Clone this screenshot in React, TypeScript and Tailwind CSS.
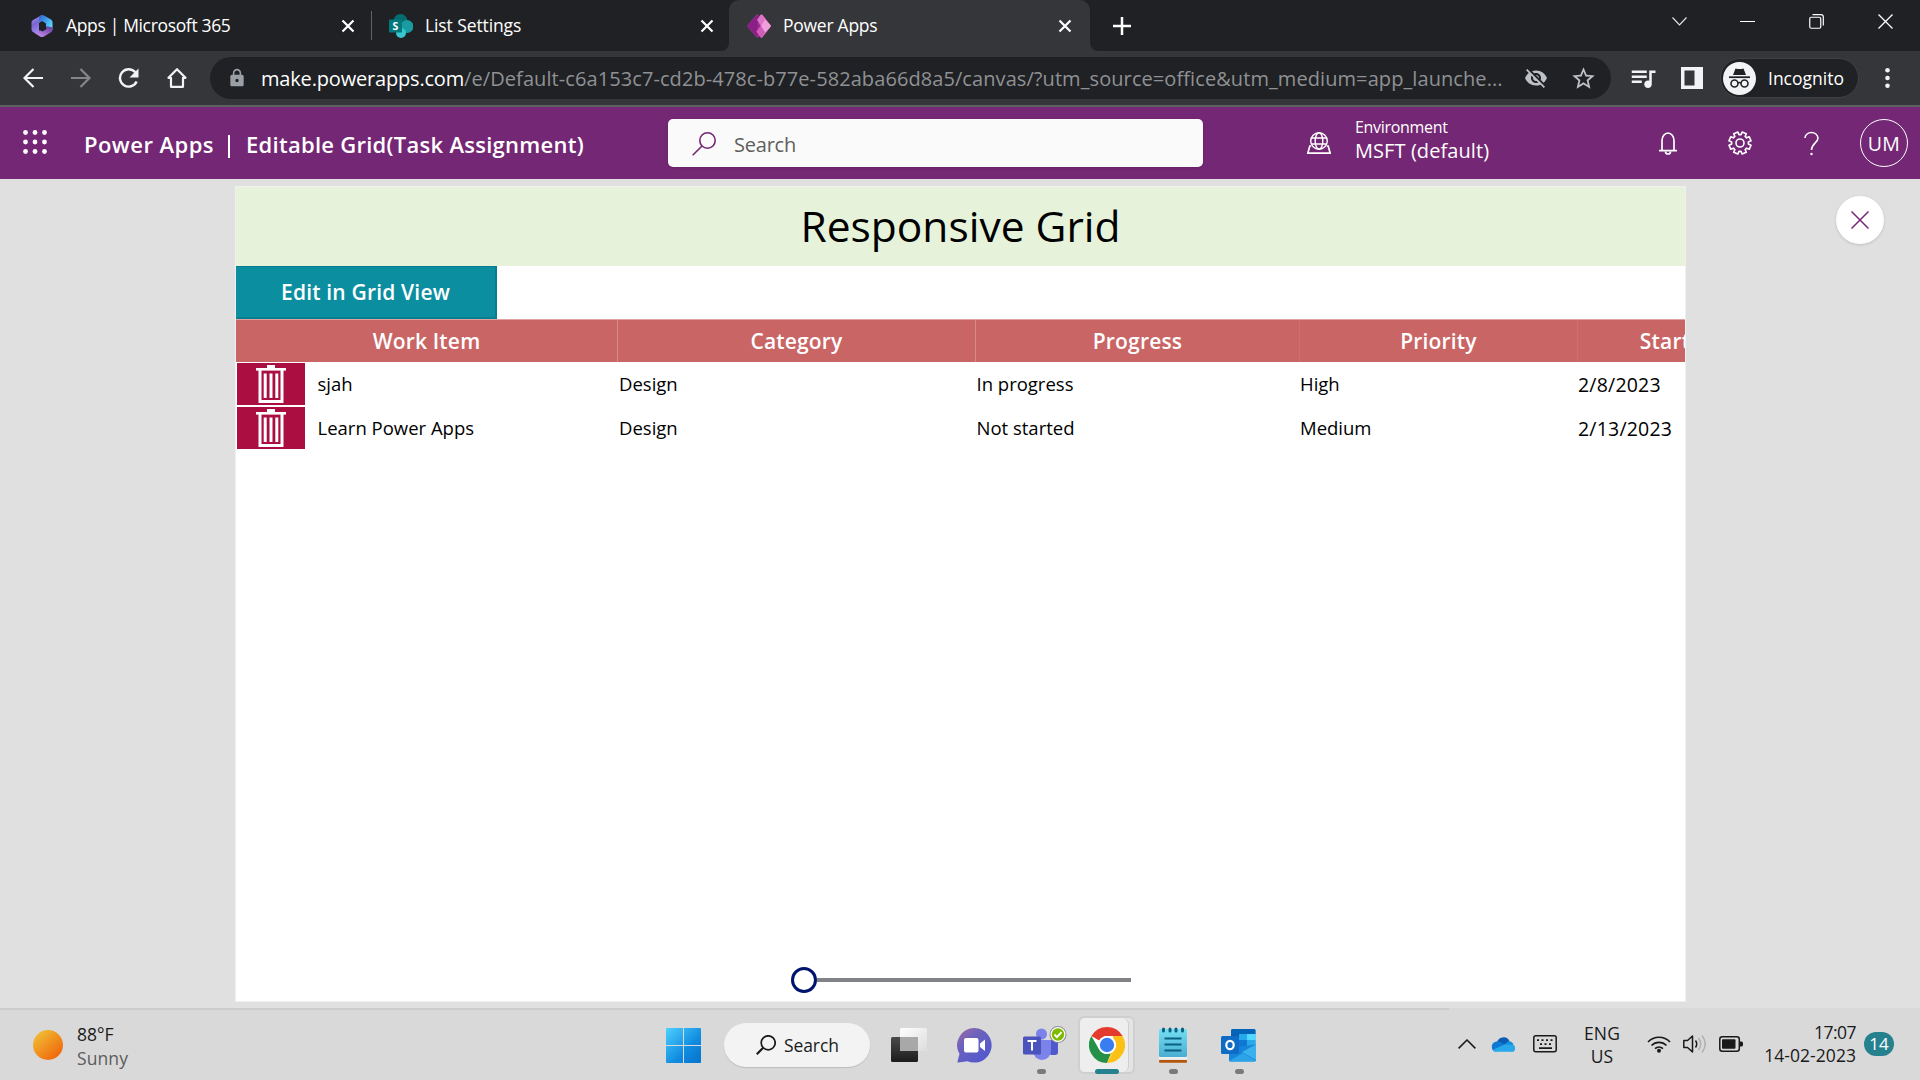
import type { ReactNode } from "react";
import { MdLock, MdQueueMusic, MdStarOutline, MdVisibilityOff } from "react-icons/md";

type P = { className?: string };

function Icon({ w, h, className = "", children, vb }: { w: number; h: number; className?: string; children: ReactNode; vb?: string }) {
  return (
    <svg width={w} height={h} viewBox={vb ?? `0 0 ${w} ${h}`} fill="none" className={"block shrink-0 " + className}>
      {children}
    </svg>
  );
}

function Microsoft365Logo({ className }: P) {
  return (
    <Icon w={22} h={24} className={className}>
      <defs>
        <linearGradient id="m1" x1="0" y1="0" x2="0.3" y2="1">
          <stop offset="0" stopColor="#b79cf4" /><stop offset="0.5" stopColor="#7a66d0" /><stop offset="1" stopColor="#9f86ee" />
        </linearGradient>
        <linearGradient id="m2" x1="0" y1="0" x2="1" y2="0.7">
          <stop offset="0" stopColor="#3560cf" /><stop offset="0.5" stopColor="#3f9bea" /><stop offset="1" stopColor="#5bdcfb" />
        </linearGradient>
        <linearGradient id="m3" x1="0" y1="1" x2="1" y2="0">
          <stop offset="0" stopColor="#d59cf6" /><stop offset="0.5" stopColor="#9a68cc" /><stop offset="1" stopColor="#5a3796" />
        </linearGradient>
      </defs>
      <path d="M11 1 2 6Q.5 7 .5 8.500v7Q.5 17 2 18l3.500 2Q8 20.500 8 18V9l3-2.500Z" fill="url(#m1)" />
      <path d="M9.500 1.500Q11 .3 13 1.500l7 4Q21.500 6.500 21.500 8v8L15 13V9.500L11 7 8 9V4Q8 2.500 9.500 1.500Z" fill="url(#m2)" />
      <path d="M21.500 13.500v2.500q0 1.300-1.500 2.200l-7 4.300q-2 1.200-4 0L3.500 19q3 1 4.500-1l.5-2 3 1.500 4-2.500V12Z" fill="url(#m3)" />
    </Icon>
  );
}

function SharePointLogo({ className }: P) {
  return (
    <Icon w={24} h={24} className={className}>
      <circle cx="11.500" cy="7" r="7" fill="#036c70" />
      <circle cx="18" cy="12.500" r="6.500" fill="#1a9ba1" />
      <circle cx="12" cy="19" r="5" fill="#37c6d0" />
      <rect x="0" y="5.500" width="13" height="13" rx="1" fill="#03787c" />
      <text x="6.500" y="16" textAnchor="middle" fontFamily="Open Sans" fontWeight="700" fontSize="10.500" fill="#fff">S</text>
    </Icon>
  );
}

function PowerAppsLogo({ className }: P) {
  return (
    <Icon w={24} h={24} className={className}>
      <path d="M9.500.8Q10.500 0 11.500.8L18 12l-6.500 11.200q-1 .8-2 0L.6 13Q0 12 .6 11Z" fill="#a0309a" />
      <path d="M10.500 1 14 4l-4 6 2 2-2 2 2 5-1.500 4L.6 13Q0 12 .6 11Z" fill="#8a1f86" />
      <path d="M13.500.8q1-.8 2 0L23.400 11q.6 1 0 2l-7.900 10.200q-1 .8-2 0L9.500 17.500 14 12 10 6Z" fill="#dd74c5" />
      <path d="M18 5.500 23.400 11q.6 1 0 2L18 18.500 14 12Z" fill="#efa0dc" />
      <path d="M14 12l4 6.500-2.500 4.700q-1 .8-2 0L9.500 17.500Z" fill="#d25cb8" />
    </Icon>
  );
}

function Cross({ className }: P) {
  return (
    <Icon w={14} h={14} className={className}>
      <path d="M1.500 1.500l11 11M12.500 1.500l-11 11" stroke="#fff" strokeWidth="2.200" />
    </Icon>
  );
}

function TabStrip() {
  return (
    <div className="flex h-[51px] items-center bg-[#202124] text-[17.5px] text-white">
      <div className="flex w-[371px] items-center">
        <Microsoft365Logo className="ml-[31px]" />
        <span className="ml-[13px] w-[275px] whitespace-nowrap tracking-[-0.34px]">Apps | Microsoft 365</span>
        <Cross />
      </div>
      <div className="h-[29px] w-px bg-[#5f6368]" />
      <div className="flex w-[349px] items-center">
        <SharePointLogo className="ml-[17px]" />
        <span className="ml-3 w-[275px] whitespace-nowrap tracking-[-0.1px]">List Settings</span>
        <Cross />
      </div>
      <div className="flex h-[51px] w-2 items-end bg-[#35363a]"><div className="h-[51px] w-2 rounded-br-lg bg-[#202124]" /></div>
      <div className="flex h-[51px] w-[361px] items-center rounded-t-[10px] bg-[#35363a]">
        <PowerAppsLogo className="ml-[18px]" />
        <span className="ml-3 w-[275px] whitespace-nowrap tracking-[-0.26px]">Power Apps</span>
        <Cross />
      </div>
      <div className="h-[51px] w-2 bg-[#35363a]"><div className="h-[51px] w-2 rounded-bl-lg bg-[#202124]" /></div>
      <Icon w={18} h={18} className="ml-[15px]"><path d="M9 0v18M0 9h18" stroke="#fff" strokeWidth="2.500" /></Icon>
      <div className="ml-auto flex h-[43px] items-center self-start">
        <Icon w={15} h={9} className="mr-[53px]"><path d="M.5.5l7 7.500L14.500.5" stroke="#e8e8e8" strokeWidth="1.100" /></Icon>
        <div className="mr-[54px] h-px w-[15px] bg-white" />
        <Icon w={15} h={15} className="mr-[54px]">
          <rect x=".75" y="3.250" width="11" height="11" rx="1.500" stroke="#fff" strokeWidth="1.200" />
          <path d="M3.500.7H12Q14.300.7 14.300 3v8.500" stroke="#fff" strokeWidth="1.200" />
        </Icon>
        <Icon w={15} h={15} className="mr-[27px]"><path d="M.5.5l14 14M14.500.5l-14 14" stroke="#fff" strokeWidth="1.300" /></Icon>
      </div>
    </div>
  );
}

function Toolbar() {
  return (
    <div className="flex h-14 items-center border-b-2 border-[#5f6062] bg-[#35363a]">
      <Icon w={20} h={20} className="ml-[23px]"><path d="M20 10H2M10.500 1 1.500 10l9 9" stroke="#f1f3f4" strokeWidth="2.200" /></Icon>
      <Icon w={20} h={20} className="ml-7"><path d="M0 10h18M9.500 1l9 9-9 9" stroke="#85868a" strokeWidth="2.200" /></Icon>
      <Icon w={21} h={21} className="ml-[27px]">
        <path d="M17.300 4.300A8.700 8.700 0 1 0 18.600 13.500" stroke="#f1f3f4" strokeWidth="2.400" />
        <path d="M20.500.5v9h-9Z" fill="#f1f3f4" />
      </Icon>
      <Icon w={20} h={20} className="ml-[28px]"><path d="M1.500 9.800H4v9h12v-9h2.500L10 1.200Z" stroke="#f1f3f4" strokeWidth="2.200" strokeLinejoin="round" /></Icon>
      <div className="ml-[23px] flex h-[42px] w-[1401px] items-center rounded-full bg-[#202124] text-[20px]">
        <MdLock className="ml-[17px] size-5 text-[#9aa0a6]" />
        <div className="ml-[14px] w-[1258px] whitespace-nowrap pt-0.5">
          <span className="tracking-[-0.18px] text-white">make.powerapps.com</span>
          <span className="tracking-[0.08px] text-[#8f9194]">/e/Default-c6a153c7-cd2b-478c-b77e-582aba66d8a5/canvas/?utm_source=office&amp;utm_medium=app_launche...</span>
        </div>
        <MdVisibilityOff className="ml-[5px] size-6 text-[#bdc1c6]" />
        <MdStarOutline className="ml-[22px] size-[27px] text-[#bdc1c6]" />
      </div>
      <MdQueueMusic className="ml-[17px] size-[30px] text-[#f1f3f4]" />
      <Icon w={22} h={22} className="ml-[23px]">
        <rect x="0" y="0" width="22" height="22" fill="#f1f3f4" />
        <rect x="3.500" y="3.500" width="10" height="15" fill="#35363a" />
      </Icon>
      <div className="ml-[17px] flex h-10 w-[139px] items-center rounded-full border border-[#3f4145] bg-[#202124]">
        <Icon w={33} h={33} className="ml-[2px]">
          <circle cx="16.500" cy="16.500" r="16.500" fill="#f1f3f4" />
          <path d="M12.500 6.500q4 1.200 8 0l2.500 6.500h-13Z" fill="#202124" />
          <path d="M6 15.200h21" stroke="#202124" strokeWidth="1.800" />
          <circle cx="11.500" cy="21.500" r="3.500" stroke="#202124" strokeWidth="1.600" />
          <circle cx="21.500" cy="21.500" r="3.500" stroke="#202124" strokeWidth="1.600" />
          <path d="M14.800 21q1.700-1.200 3.400 0" stroke="#202124" strokeWidth="1.500" />
        </Icon>
        <span className="ml-3 text-[17.5px] text-white">Incognito</span>
      </div>
      <Icon w={5} h={20} className="ml-[26px]">
        <circle cx="2.500" cy="2.300" r="2.300" fill="#f1f3f4" /><circle cx="2.500" cy="10" r="2.300" fill="#f1f3f4" /><circle cx="2.500" cy="17.700" r="2.300" fill="#f1f3f4" />
      </Icon>
    </div>
  );
}

function gearPath() {
  const pts: string[] = [];
  const teeth = 8;
  for (let i = 0; i < teeth; i++) {
    const base = (i * 2 * Math.PI) / teeth + Math.PI / 8;
    [[-0.27, 8.400], [-0.2, 11.200], [0.2, 11.200], [0.27, 8.400]].forEach(([a, r]) => {
      pts.push(`${(12 + r * Math.cos(base + a)).toFixed(2)} ${(12 + r * Math.sin(base + a)).toFixed(2)}`);
    });
  }
  return "M" + pts.join("L") + "Z";
}

function AppHeader() {
  return (
    <div className="flex h-[72px] items-center bg-[#742774] text-white">
      <Icon w={24} h={24} className="ml-[23px] mb-0.5">
        {[2.500, 12, 21.500].map((y) => [2.500, 12, 21.500].map((x) => <circle key={`${x}-${y}`} cx={x} cy={y} r="2.400" fill="#fff" />))}
      </Icon>
      <div className="ml-[37px] flex w-[584px] items-center whitespace-nowrap pt-0.5 text-[22px] font-semibold">
        <span className="w-[144px] tracking-[0.46px]">Power Apps</span>
        <div className="mt-1 h-[23px] w-[2px] bg-white" />
        <span className="ml-4 tracking-[0.27px]">Editable Grid(Task Assignment)</span>
      </div>
      <div className="flex h-12 w-[535px] items-center rounded-[5px] bg-[#fafafa] shadow-sm">
        <Icon w={24} h={24} className="ml-6 mt-px">
          <circle cx="15.500" cy="8.500" r="7.700" stroke="#742774" strokeWidth="1.600" />
          <path d="M10 14 .7 23.300" stroke="#742774" strokeWidth="1.600" />
        </Icon>
        <span className="ml-[18px] pt-1 text-[20px] tracking-[-0.22px] text-[#605e5c]">Search</span>
      </div>
      <Icon w={24} h={22} className="ml-[104px]">
        <g stroke="#fff" strokeWidth="1.400">
          <circle cx="12" cy="9" r="8.300" /><ellipse cx="12" cy="9" rx="3.800" ry="8.300" />
          <path d="M4.500 6h15M4.500 12h15" />
          <path d="M4.300 14H2.800L.8 21.200h22.400L21.200 14h-1.500" strokeWidth="1.700" />
        </g>
      </Icon>
      <div className="ml-6 w-[304px] whitespace-nowrap pb-[7px]">
        <div className="-mt-px text-[16px] leading-[22px] tracking-[-0.3px]">Environment</div>
        <div className="text-[20px] leading-[25px] tracking-[0.08px]">MSFT (default)</div>
      </div>
      <Icon w={18} h={23}>
        <path d="M3 18.500V8.500a6 7.500 0 0 1 12 0v10M0 18.700h18" stroke="#fff" strokeWidth="1.700" />
        <path d="M6.500 19.500a2.500 2.500 0 0 0 5 0" stroke="#fff" strokeWidth="1.700" />
      </Icon>
      <Icon w={24} h={24} className="ml-[51px]">
        <path d={gearPath()} stroke="#fff" strokeWidth="1.600" strokeLinejoin="round" />
        <circle cx="12" cy="12" r="4" stroke="#fff" strokeWidth="1.600" />
      </Icon>
      <Icon w={15} h={25} className="ml-[52px]">
        <path d="M.9 7A6.600 6.200 0 0 1 14 7C14 11.500 7.500 12.500 7.500 19" stroke="#fff" strokeWidth="1.600" />
        <circle cx="7.500" cy="23" r="1.200" fill="#fff" />
      </Icon>
      <div className="ml-[41px] flex size-12 items-center justify-center rounded-full border border-white pt-0.5 text-[19.5px] tracking-[0.3px]">UM</div>
    </div>
  );
}

function Trash() {
  return (
    <Icon w={30} h={38}>
      <rect x="11" y="0" width="8" height="3.500" fill="#fff" />
      <rect x="0" y="3" width="30" height="2.600" fill="#fff" />
      <path d="M4 5v31.500h22V5" stroke="#fff" strokeWidth="3" />
      <path d="M9.200 8.500v24.500M15 8.500v24.500M20.800 8.500v24.500" stroke="#fff" strokeWidth="3" />
    </Icon>
  );
}

const columns = [
  { name: "Work Item", className: "w-[382px] border-r border-[#d68b8b]" },
  { name: "Category", className: "w-[358px] border-r border-[#d68b8b]" },
  { name: "Progress", className: "w-[324px] border-r border-[#ce6f6f]" },
  { name: "Priority", className: "w-[278px] border-r border-[#ce6f6f]" },
  { name: "Start", className: "w-[210px] pr-9" },
];

const rows = [
  ["sjah", "Design", "In progress", "High", "2/8/2023"],
  ["Learn Power Apps", "Design", "Not started", "Medium", "2/13/2023"],
];

function Canvas() {
  return (
    <div className="flex h-[816px] w-[1451px] flex-col overflow-hidden border border-[#f0f0f0] bg-white">
      <div className="flex h-[79px] items-center justify-center bg-[#e6f3da] pb-px text-[42.500px] text-black">Responsive Grid</div>
      <div className="flex h-[53px] w-[261px] items-center justify-center border-2 border-t border-l-0 border-[#087d8d] bg-[#0b8ea0] pt-0.5 text-[21px] font-semibold tracking-[0.18px] text-white">Edit in Grid View</div>
      <div className="flex h-[43px] w-[1552px] border-t border-[#dfa2a2] bg-[#ca6565] text-[21px] font-semibold tracking-[0.18px] text-white">
        {columns.map((c) => <div key={c.name} className={"flex shrink-0 items-center justify-center pt-0.5 " + c.className}>{c.name}</div>)}
      </div>
      {rows.map((r) => (
        <div key={r[0]} className="flex h-11 shrink-0 items-center whitespace-nowrap text-[18.500px] text-black">
          <div className="ml-px flex h-[42px] w-[68px] items-center justify-center bg-[#ab0f42]"><Trash /></div>
          <span className="ml-[12.500px] w-[301.500px]">{r[0]}</span>
          <span className="w-[357.500px]">{r[1]}</span>
          <span className="w-[323.500px]">{r[2]}</span>
          <span className="w-[278px]">{r[3]}</span>
          <span className="pt-px text-[19.500px] tracking-[0.2px]">{r[4]}</span>
        </div>
      ))}
      <div className="mb-[8px] ml-[554.500px] mt-auto flex items-center">
        <div className="size-[26px] rounded-full border-[3px] border-[#00136f] bg-white" />
        <div className="h-1 w-[314px] bg-[#808285]" />
      </div>
    </div>
  );
}

function Taskbar() {
  return (
    <div className="flex h-[72px] items-center bg-[#d9d9d9] text-[17.500px] text-[#1a1a1a]">
      <Icon w={30} h={30} className="ml-[33px] mt-0.5">
        <defs><linearGradient id="sun" x1="0.1" y1="0.1" x2="0.8" y2="0.9"><stop offset="0" stopColor="#f0be35" /><stop offset="1" stopColor="#f0690c" /></linearGradient></defs>
        <circle cx="15" cy="15" r="15" fill="url(#sun)" />
      </Icon>
      <div className="ml-[14px] w-[589px] pt-[3px] leading-6">
        <div>88°F</div>
        <div className="tracking-[0.1px] text-[#5c5c5c]">Sunny</div>
      </div>
      <Icon w={35} h={35} className="mt-0.5">
        <defs><linearGradient id="win" x1="0" y1="0" x2="35" y2="35" gradientUnits="userSpaceOnUse"><stop offset="0" stopColor="#4fd0ff" /><stop offset="0.6" stopColor="#108ce0" /><stop offset="1" stopColor="#0672cb" /></linearGradient></defs>
        <path d="M1 0h16v17H0V1Q0 0 1 0ZM18 0h16q1 0 1 1v16H18ZM0 18h17v17H1q-1 0-1-1ZM18 18h17v16q0 1-1 1H18Z" fill="url(#win)" />
      </Icon>
      <div className="ml-[23px] mt-0.5 flex h-11 w-[146px] items-center rounded-full bg-[#f3f3f3] shadow-[0_1px_1px_#bdbdbd]">
        <Icon w={20} h={20} className="ml-8">
          <circle cx="12.200" cy="7.800" r="7" stroke="#1a1a1a" strokeWidth="1.700" /><path d="M7.200 12.800.8 19.200" stroke="#1a1a1a" strokeWidth="2.200" />
        </Icon>
        <span className="ml-2 pt-px tracking-[-0.1px]">Search</span>
      </div>
      <Icon w={36} h={34} className="ml-[21px] mt-0.5">
        <defs>
          <linearGradient id="tv" x1="0" y1="0" x2="0" y2="1"><stop offset="0" stopColor="#4a4a4a" /><stop offset="1" stopColor="#1c1c1c" /></linearGradient>
          <linearGradient id="tw" x1="0" y1="0" x2="1" y2="1"><stop offset="0" stopColor="#fff" /><stop offset="1" stopColor="#dcdcdc" /></linearGradient>
        </defs>
        <rect x="0" y="9" width="27" height="25" rx="1.500" fill="url(#tv)" />
        <rect x="9" y="0" width="27" height="23" rx="1.500" fill="url(#tw)" />
        <rect x="9" y="9" width="18" height="14" fill="#a8a8a8" />
      </Icon>
      <Icon w={35} h={35} className="ml-[30px] mt-0.5">
        <defs><linearGradient id="chat" x1="0" y1="0" x2="0.8" y2="1"><stop offset="0" stopColor="#a06aa5" /><stop offset="0.4" stopColor="#6b61bd" /><stop offset="1" stopColor="#5058cf" /></linearGradient></defs>
        <path d="M17.500 0a17.300 17.300 0 1 1-7 33.200L1.500 34.500q-1.300 0-1-1.300L2.500 26A17.300 17.300 0 0 1 17.500 0Z" fill="url(#chat)" />
        <rect x="7" y="10" width="14.500" height="14.500" rx="2" fill="#fff" />
        <path d="M23 15.500 28 11.500v11.500l-5-4Z" fill="#fff" />
      </Icon>
      <div className="relative ml-[31px] flex h-[72px] w-11 items-center">
        <Icon w={44} h={36}>
          <circle cx="18.500" cy="8" r="5.500" fill="#7b83eb" />
          <rect x="26" y="14" width="9" height="15" rx="3" fill="#5059c9" />
          <path d="M10 14h18v11a9 9 0 0 1-18 0Z" fill="#7b83eb" />
          <rect x="0" y="10.500" width="18" height="18" rx="1.500" fill="#4b53bc" />
          <path d="M4.500 15h9M9 15v9.500" stroke="#fff" strokeWidth="2" />
          <circle cx="35" cy="8.500" r="8.500" fill="#8d8d8d" /><circle cx="35" cy="8.500" r="7.500" fill="#fff" /><circle cx="35" cy="8.500" r="6.200" fill="#7fba00" />
          <path d="M31.500 8.500l2.500 2.700 4.500-5" stroke="#fff" strokeWidth="1.900" />
        </Icon>
        <div className="absolute bottom-[6px] left-[14px] h-[5px] w-[9px] rounded-full bg-[#7a7a7a]" />
      </div>
      <div className="relative ml-[11px] mt-0.5 h-[58px] w-[57px] rounded-md border-2 border-[#cfcfcf] bg-[#e4e4e4]">
        <div className="flex h-[54px] w-[49px] items-center justify-center rounded-md border-r border-[#cfcfcf] bg-[#eeeeee] pl-1.5">
          <Icon w={36} h={36}>
            <circle cx="18" cy="18" r="18" fill="#fff" />
            <path d="M18 0A18 18 0 0 1 33.590 9H18a9 9 0 0 0-7.790 4.500L2.410 9A18 18 0 0 1 18 0Z" fill="#e33b2e" />
            <path d="M33.590 9A18 18 0 0 1 18 36L25.790 22.500A9 9 0 0 0 25.790 13.500L24 11V9Z" fill="#fbc116" />
            <path d="M2.410 9 10.210 22.500A9 9 0 0 0 18 27l4-.8L18 36A18 18 0 0 1 2.410 9Z" fill="#249146" />
            <path d="M22 26.200 25.790 22.500 18 36Z" fill="#fbc116" />
            <circle cx="18" cy="18" r="9" fill="#fff" /><circle cx="18" cy="18" r="7.200" fill="#3a7df0" />
          </Icon>
        </div>
        <div className="absolute bottom-[-2px] left-[15px] h-[5px] w-6 rounded-full bg-[#26818f]" />
      </div>
      <div className="relative ml-6 flex h-[72px] w-7 items-center pt-0.5">
        <Icon w={28} h={36}>
          <defs><linearGradient id="note" x1="0" y1="0" x2="0" y2="1"><stop offset="0" stopColor="#74dff2" /><stop offset="1" stopColor="#49aed2" /></linearGradient></defs>
          <rect x="0" y="33" width="28" height="2.800" rx="1" fill="#b4560c" />
          <rect x="0" y="28" width="28" height="4.500" fill="#eee" />
          <rect x="0" y="2" width="28" height="28" rx="1.500" fill="url(#note)" />
          <path d="M5.500 11.500h17M5.500 17.500h17M5.500 23.500h17" stroke="#0b5f80" strokeWidth="1.800" />
          <path d="M4.500 2v2M11 2v2M17 2v2M23.500 2v2" stroke="#0b5f80" strokeWidth="3" strokeLinecap="round" />
        </Icon>
        <div className="absolute bottom-[6px] left-[10px] h-[5px] w-[9px] rounded-full bg-[#7a7a7a]" />
      </div>
      <div className="relative ml-[34px] flex h-[72px] w-9 items-center pt-0.5">
        <Icon w={36} h={33}>
          <rect x="10" y="0" width="24.500" height="20" rx="1.500" fill="#28a8ea" />
          <path d="M10 4V1.500Q10 0 11.500 0H33q1.500 0 1.500 1.500V5H10Z" fill="#0364b8" />
          <path d="M10 5h8v15h-8Z" fill="#0a5fb4" /><path d="M18 5h8v6h-8Z" fill="#28a8ea" /><path d="M26 5h8.500v6H26Z" fill="#50d9ff" /><path d="M18 11h8v9h-8Z" fill="#0f78d4" /><path d="M26 11h8.500v7H26Z" fill="#28a8ea" />
          <path d="M8 19 35 15.500V31q0 1.500-1.500 1.500H9.500Q8 32.500 8 31Z" fill="#1784d9" />
          <path d="M35 15.500V31L21 23Z" fill="#38b1ee" />
          <path d="M8 32 22 24l12.500 7.500q-.5 1-1.500 1H9.500Z" fill="#2aa3e8" />
          <rect x="0" y="7" width="18" height="18" rx="1.500" fill="#0f6cc4" />
          <ellipse cx="9" cy="16" rx="3.700" ry="4.200" stroke="#fff" strokeWidth="2.200" />
        </Icon>
        <div className="absolute bottom-[6px] left-[14px] h-[5px] w-[9px] rounded-full bg-[#7a7a7a]" />
      </div>
      <Icon w={18} h={10} className="ml-[201px]"><path d="M.6 9.400 9 1l8.400 8.400" stroke="#1a1a1a" strokeWidth="1.500" /></Icon>
      <Icon w={24} h={16} className="ml-[15px]">
        <path d="M6 7A6.500 6.500 0 0 1 18.500 5.500L14 11Z" fill="#0a5cb0" />
        <path d="M4.500 15.500A5 5 0 0 1 4 6Q8 4 11 7l6 4-12 4.500Z" fill="#0f78d4" />
        <path d="M12 9.500 17 5.500Q21 4.500 22.500 9L20 12Z" fill="#1490df" />
        <path d="M1.500 14 13.500 8.500 22.500 9a3.700 3.700 0 0 1-2.700 6.800H5Q2.500 15.800 1.500 14Z" fill="#28a8ea" />
      </Icon>
      <Icon w={24} h={18} className="ml-[18px]">
        <rect x=".8" y=".8" width="22.400" height="16" rx="2" stroke="#1a1a1a" strokeWidth="1.500" />
        <path d="M4 5.200h2M8.500 5.200h2M13 5.200h2M17.500 5.200h2M7 9.200h2M11.500 9.200h2M16 9.200h2M6 13.200h13" stroke="#1a1a1a" strokeWidth="1.700" />
      </Icon>
      <div className="ml-[26px] w-[38px] pt-px text-center leading-[23px] tracking-[0.1px]"><div>ENG</div><div>US</div></div>
      <Icon w={24} h={18} className="ml-[26px]">
        <path d="M1 7A15 15 0 0 1 23 7M4.500 10.500A10.500 10.500 0 0 1 19.500 10.500M8 13.700A6 6 0 0 1 16 13.700" stroke="#1a1a1a" strokeWidth="1.600" />
        <circle cx="12" cy="15.800" r="2" fill="#1a1a1a" />
      </Icon>
      <Icon w={24} h={20} className="ml-3">
        <path d="M.8 6.500h3.700L9.500 2v16l-5-4.500H.8Z" stroke="#1a1a1a" strokeWidth="1.500" strokeLinejoin="round" />
        <path d="M12.500 6.500Q15 10 12.500 13.500" stroke="#1a1a1a" strokeWidth="1.500" />
        <path d="M15.500 4q4.500 6 0 12M19 1.500q6.500 8.500 0 17" stroke="#b0b0b0" strokeWidth="1.500" />
      </Icon>
      <Icon w={24} h={16} className="ml-3">
        <rect x=".8" y=".8" width="19.500" height="14.400" rx="2.500" stroke="#1a1a1a" strokeWidth="1.500" />
        <rect x="3" y="3.200" width="13.500" height="9.600" rx="1" fill="#1a1a1a" /><path d="M21 5.500h1.500q1.500 0 1.500 1.500v2q0 1.500-1.500 1.500H21Z" fill="#1a1a1a" />
      </Icon>
      <div className="w-[113px] pb-px text-right leading-[23px]"><div className="tracking-[-0.5px]">17:07</div><div className="tracking-[0.05px]">14-02-2023</div></div>
      <div className="ml-2 flex h-6 w-[30px] items-center justify-center rounded-full bg-[#26818f] text-[17px] text-white">14</div>
    </div>
  );
}

export default function App() {
  return (
    <div className="flex h-[1080px] w-[1920px] flex-col overflow-hidden bg-[#e0e0e0] font-['Open_Sans',sans-serif]">
      <TabStrip />
      <Toolbar />
      <AppHeader />
      <div className="flex h-[829px] items-start">
        <div className="ml-[235px] mt-[7px]"><Canvas /></div>
        <div className="ml-[150px] mt-[17px] flex size-12 items-center justify-center rounded-full bg-white shadow-[0_1px_3px_rgba(0,0,0,0.15)]">
          <Icon w={18} h={18}><path d="M.5.5l17 17M17.500.5l-17 17" stroke="#742774" strokeWidth="1.500" /></Icon>
        </div>
      </div>
      <div className="relative">
        <Taskbar />
        <div className="absolute left-0 top-0 h-0.5 w-[1449px] bg-[#cbcbcb]" />
      </div>
    </div>
  );
}
